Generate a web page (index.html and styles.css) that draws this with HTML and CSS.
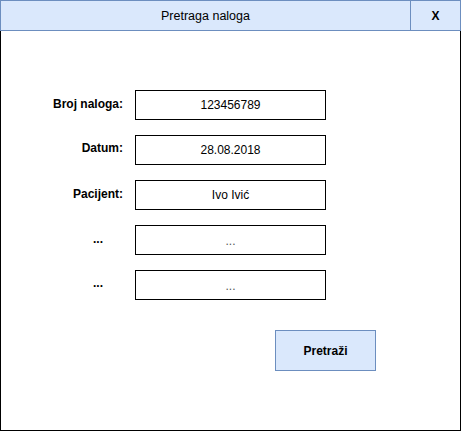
FILE: index.html
```html
<!DOCTYPE html>
<html lang="hr">
<head>
<meta charset="utf-8">
<title>Pretraga naloga</title>
<link rel="stylesheet" href="styles.css">
</head>
<body>
<div class="window">
  <div class="titlebar">
    <div class="titlebar__title">Pretraga naloga</div>
    <div class="titlebar__close">X</div>
  </div>
  <div class="content">
    <div class="form">
      <div class="form__label">Broj naloga:</div>
      <div class="form__field">123456789</div>
      <div class="form__label form__label--raised">Datum:</div>
      <div class="form__field">28.08.2018</div>
      <div class="form__label">Pacijent:</div>
      <div class="form__field">Ivo Ivić</div>
      <div class="form__label form__label--dots">...</div>
      <div class="form__field form__field--muted">...</div>
      <div class="form__label form__label--dots form__label--raised">...</div>
      <div class="form__field form__field--muted">...</div>
    </div>
    <div class="actions">
      <div class="button">Pretraži</div>
    </div>
  </div>
</div>
</body>
</html>
```
FILE: styles.css
```css
* {
  box-sizing: border-box;
}

html, body {
  margin: 0;
  padding: 0;
  background: #ffffff;
}

body {
  font-family: "Liberation Sans", Arial, Helvetica, sans-serif;
  font-size: 12px;
  color: #000000;
}

.window {
  width: 461px;
  height: 431px;
  display: flex;
  flex-direction: column;
}

.titlebar {
  height: 31px;
  display: flex;
  background: #dae8fc;
  border: 1px solid #6c8ebf;
}

.titlebar__title {
  flex: 1;
  display: flex;
  align-items: center;
  justify-content: center;
  font-size: 12.5px;
}

.titlebar__close {
  width: 50px;
  display: flex;
  align-items: center;
  justify-content: center;
  border-left: 1px solid #6c8ebf;
  font-weight: bold;
}

.content {
  flex: 1;
  border: 1px solid #000000;
  border-top: none;
  padding-top: 59px;
}

.form {
  display: grid;
  grid-template-columns: 122px 191px;
  column-gap: 12px;
  row-gap: 15px;
  grid-auto-rows: 30px;
}

.form__label {
  display: flex;
  align-items: center;
  justify-content: flex-end;
  font-weight: bold;
  padding-bottom: 2px;
}

.form__label--raised {
  padding-bottom: 4px;
}

.form__label--dots {
  padding-right: 20px;
}

.form__field {
  display: flex;
  align-items: center;
  justify-content: center;
  border: 1px solid #000000;
  background: #ffffff;
}

.form__field--muted {
  color: #555555;
  padding-top: 2px;
}

.actions {
  padding-left: 274px;
  margin-top: 30px;
}

.button {
  width: 101px;
  height: 41px;
  display: flex;
  align-items: center;
  justify-content: center;
  background: #dae8fc;
  border: 1px solid #6c8ebf;
  font-weight: bold;
}
```
